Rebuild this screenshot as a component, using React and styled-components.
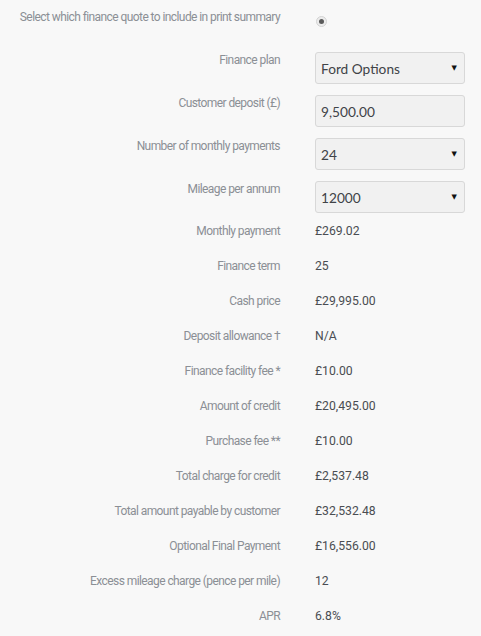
import styled, { createGlobalStyle } from "styled-components";

const GlobalStyle = createGlobalStyle`
  html, body {
    margin: 0;
    padding: 0;
    background: #f8f8f8;
  }
  body {
    font-family: Roboto, "Liberation Sans", Arial, sans-serif;
  }
`;

const Form = styled.div`
  width: 481px;
  min-height: 636px;
  padding-top: 9px;
  box-sizing: border-box;
  background: #f8f8f8;
`;

const Row = styled.div`
  display: grid;
  grid-template-columns: 280px 150px;
  column-gap: 35px;
  align-items: start;
  height: ${(p) => p.h || 35}px;
`;

const Label = styled.div`
  text-align: right;
  font-size: 12px;
  line-height: 16px;
  color: #8b8f95;
  letter-spacing: -0.58px;
  white-space: nowrap;
`;

const Value = styled.div`
  font-size: 12.2px;
  line-height: 16px;
  color: #4a4d52;
`;

const RadioCell = styled.div`
  padding: 7px 0 0 1px;
`;

const Radio = styled.span`
  display: block;
  width: 11px;
  height: 11px;
  border-radius: 50%;
  box-sizing: border-box;
  background: #ececec;
  border: 1px solid #d3d3d3;
  position: relative;
  &::after {
    content: "";
    position: absolute;
    left: 2px;
    top: 2px;
    width: 5px;
    height: 5px;
    border-radius: 50%;
    background: #5a5a5a;
  }
`;

const Field = styled.div`
  position: relative;
  height: 32px;
`;

const Control = styled.div`
  height: 32px;
  box-sizing: border-box;
  border: 1px solid #d8d8d8;
  border-radius: 3px;
  background: #f1f1f1;
  padding: 1px 5px 0;
  display: flex;
  align-items: center;
  font-family: Lato, "Open Sans", sans-serif;
  font-size: 13.7px;
  color: #404347;
`;

const Arrow = styled.span`
  position: absolute;
  right: 8px;
  top: 12px;
  font-size: 7px;
  line-height: 8px;
  color: #111;
  font-family: "DejaVu Sans", sans-serif;
`;

const SelectField = ({ value }) => (
  <Field>
    <Control>{value}</Control>
    <Arrow>▼</Arrow>
  </Field>
);

const rows = [
  ["Monthly payment", "£269.02"],
  ["Finance term", "25"],
  ["Cash price", "£29,995.00"],
  ["Deposit allowance †", "N/A"],
  ["Finance facility fee *", "£10.00"],
  ["Amount of credit", "£20,495.00"],
  ["Purchase fee **", "£10.00"],
  ["Total charge for credit", "£2,537.48"],
  ["Total amount payable by customer", "£32,532.48"],
  ["Optional Final Payment", "£16,556.00"],
  ["Excess mileage charge (pence per mile)", "12"],
  ["APR", "6.8%"],
];

export default function App() {
  return (
    <>
      <GlobalStyle />
      <Form>
        <Row h={43}>
          <Label>Select which finance quote to include in print summary</Label>
          <RadioCell>
            <Radio />
          </RadioCell>
        </Row>
        <Row h={43}>
          <Label>Finance plan</Label>
          <SelectField value="Ford Options" />
        </Row>
        <Row h={43}>
          <Label>Customer deposit (£)</Label>
          <Field>
            <Control>9,500.00</Control>
          </Field>
        </Row>
        <Row h={43}>
          <Label>Number of monthly payments</Label>
          <SelectField value="24" />
        </Row>
        <Row h={42}>
          <Label>Mileage per annum</Label>
          <SelectField value="12000" />
        </Row>
        {rows.map(([label, value]) => (
          <Row key={label}>
            <Label>{label}</Label>
            <Value>{value}</Value>
          </Row>
        ))}
      </Form>
    </>
  );
}
